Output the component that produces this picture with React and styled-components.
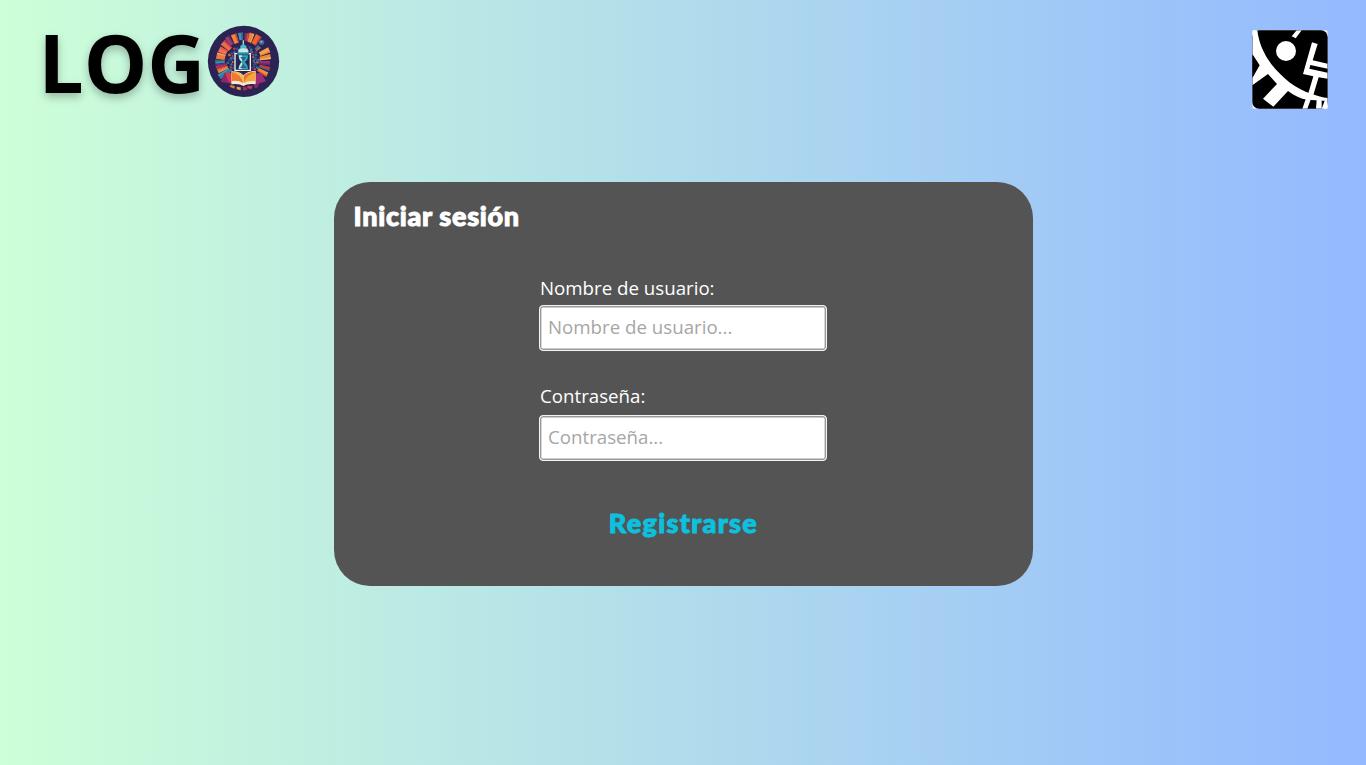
import React from "react";
import styled, { createGlobalStyle } from "styled-components";

const GlobalStyle = createGlobalStyle`
  * { box-sizing: border-box; }
  body { margin: 0; font-family: "Open Sans", "Noto Sans", sans-serif; }
`;

const Page = styled.div`
  height: 765px;
  overflow: hidden;
  background: linear-gradient(90deg, #cdffd8, #94b9ff);
`;

const Header = styled.header`
  height: 182px;
  padding: 25px 38px 0 38.5px;
  display: flex;
  justify-content: space-between;
  align-items: flex-start;
`;

const Brand = styled.div`
  display: flex;
  align-items: flex-start;
`;

const Wordmark = styled.span`
  width: 168.5px;
  margin-top: -3px;
  font-size: 80px;
  line-height: 80px;
  font-weight: 700;
  color: #000;
  text-shadow: 0 4px 9px rgba(0, 0, 0, 0.27);
`;

const EmblemSvg = styled.svg`
  display: block;
  width: 73px;
  height: 73px;
`;

const BadgeSvg = styled.svg`
  display: block;
  width: 76px;
  height: 79px;
  margin-top: 5px;
`;

const Card = styled.main`
  width: 699px;
  height: 403.5px;
  margin: 0 auto;
  padding: 17px 20px;
  border-radius: 36px;
  background: #545454;
  display: flex;
  flex-direction: column;
  align-items: center;
`;

const roundedFace = `
  margin: 0;
  font-family: "Lato", sans-serif;
  font-weight: 900;
  white-space: nowrap;
  -webkit-text-stroke: 1px currentColor;
  stroke-linejoin: round;
`;

const Title = styled.h1`
  ${roundedFace}
  align-self: flex-start;
  font-size: 27px;
  line-height: 34px;
  letter-spacing: 0.7px;
  color: #fff;
`;

const Form = styled.form`
  width: 288px;
  margin-top: 41px;
  display: flex;
  flex-direction: column;
`;

const Field = styled.div`
  height: ${(p) => p.$height}px;
`;

const Label = styled.label`
  display: block;
  height: ${(p) => p.$height}px;
  padding-left: 1px;
  font-size: 18.7px;
  font-weight: 400;
  line-height: 28px;
  color: #fff;
`;

const Input = styled.input`
  display: block;
  width: 288px;
  height: 46px;
  padding: 0 8px 3px;
  border: 1px solid #f4f4f4;
  border-radius: 4px;
  outline: none;
  box-shadow: inset 0 0 0 1.4px #999;
  background: #fff;
  font: 400 18.7px "Open Sans", sans-serif;
  &::placeholder { color: #a6a6a6; opacity: 1; }
`;

const Register = styled.a`
  ${roundedFace}
  margin-top: -1px;
  padding-left: 1px;
  font-size: 27px;
  line-height: 34px;
  letter-spacing: 1.3px;
  color: #0cc0df;
`;

// Books around the ring: angle, inner radius, outer radius, width, colour, spine colour
const BOOKS = [
  [-78, 56, 82, 19, "#ef7a3c", "#f6a04b"],
  [-63, 56, 81, 18, "#ec6f62", "#e8503c"],
  [-47, 53, 84, 19, "#ee6b3f", "#a83a70"],
  [-34, 60, 88, 15, "#a9386f", "#6c2d6b"],
  [-20, 58, 86, 17, "#f0853c", "#d9443c"],
  [-6, 64, 86, 14, "#3f95ae", "#2a6389"],
  [7, 62, 85, 13, "#8c2e68", "#d84a3c"],
  [17, 60, 88, 15, "#f2823a", "#f4a046"],
  [31, 60, 90, 19, "#f0652e", "#c83a3a"],
  [47, 50, 66, 13, "#2f7396", "#e45738"],
  [66, 54, 85, 16, "#f4a14a", "#ef7c35"],
  [80, 50, 83, 15, "#f08a38", "#f6b060"],
  [94, 48, 80, 13, "#9c2f74", "#5f2a68"],
  [106, 50, 82, 12, "#d13c38", "#2d6d96"],
  [119, 50, 82, 14, "#f28d3a", "#e5502f"],
  [-91, 56, 84, 12, "#3b8fae", "#276a92"],
  [-101, 50, 84, 12, "#b13366", "#7c2a64"],
  [-111, 50, 82, 13, "#f0873a", "#e4553a"],
  [-123, 48, 86, 16, "#2f7fa4", "#3a9cb5"],
].map(([angle, from, to, width, fill, spine]) => ({ angle, from, to, width, fill, spine }));

const SPECKS = ["#2f7fa4", "#c83a4c", "#3f4a86", "#2a6d96", "#51407c", "#2f7fa4", "#e4663a", "#384a82"];

function Emblem() {
  return (
    <EmblemSvg viewBox="23 21 219 219" aria-hidden="true">
      <circle cx="132.5" cy="130" r="107" fill="#2b2353" />
      {BOOKS.map(({ angle, from, to, width, fill, spine }) => (
        <g key={angle} transform={`rotate(${angle} 132 130)`}>
          <path
            d={`M${132 - width / 2} ${130 - to}h${width}l-2 ${to - from}h${4 - width}z`}
            fill={fill}
          />
          <path
            d={`M${132 + width / 2 - 5} ${130 - to}h5l-2 ${to - from}h-3z`}
            fill={spine}
          />
        </g>
      ))}
      {Array.from({ length: 26 }, (_, i) => (
        <g key={i} transform={`rotate(${-125 + i * 10} 132 130)`}>
          <rect x="128" y={80 + (i % 3) * 4} width="7" height="8" rx="3" fill={SPECKS[i % 8]} />
          <circle cx="133" cy={94 + (i % 2) * 4} r="3" fill={SPECKS[(i + 3) % 8]} />
        </g>
      ))}
      <circle cx="187" cy="73" r="8" fill="#41669a" />
      <circle cx="186" cy="71" r="3" fill="#9bb9d2" />
      <circle cx="167" cy="129" r="6" fill="none" stroke="#456a99" strokeWidth="3" />
      <path d="M104 106h50v56h-50z" fill="#272653" />
      <path d="M114 107h-7v50h46v-50h-7" fill="none" stroke="#eef4f4" strokeWidth="4" />
      <path d="M132 67v13" stroke="#a9dce2" strokeWidth="4" />
      <path d="M123 85q9-12 18 0v8h-18z" fill="#53bac9" />
      <path d="M117 96q4-5 15-5t15 5v9h-30z" fill="#c5e9e9" />
      <path d="M115 103h34v7h-34z" fill="#268dac" />
      <path d="M118 112h28q0 15-10 20 9 6 10 21h-28q1-14 10-21-10-6-10-20z" fill="#38a3b2" />
      <path d="M118 112h10v41h-10q1-14 10-21-10-6-10-20z" fill="#b5e5e4" />
      <path d="M123 117h18l-9 12z" fill="#20678c" />
      <path d="M122 150l10-12 10 12z" fill="#20678c" />
      <path d="M64 191l12-26 23 1v32z" fill="#8d276b" />
      <path d="M167 166l19 0 14 24-33 10z" fill="#9e2b75" />
      <path d="M77 163l19 3v29l-10-7z" fill="#d73847" />
      <path d="M96 160q25-1 36 12 12-13 37-13v40q-26-3-37 5-12-8-36-5z" fill="#f8e8cf" />
      <path d="M97 161q24 0 34 13v21q-12-9-34-6z" fill="#ee7934" />
      <path d="M133 174q12-14 35-13v28q-23-2-35 7z" fill="#f6a53e" />
      <path d="M98 162q25 7 33 29v-17q-10-12-33-12z" fill="#f6bd4a" />
      <path d="M168 163q-20 5-35 29v-18q10-12 35-11z" fill="#e7742e" />
      <path d="M94 201l13 3-2 8-14-6z" fill="#e57a3d" />
      <path d="M112 206l12 2v9l-12-3z" fill="#f0a14b" />
      <path d="M130 208l10-2 4 9-12 3z" fill="#a32c5d" />
      <path d="M145 203l15 2-4 9-13-4z" fill="#cf3948" />
      <path d="M164 202l16-5-5 11-9 3z" fill="#8d276b" />
    </EmblemSvg>
  );
}

function Badge() {
  return (
    <BadgeSvg viewBox="37 31 228 237" aria-hidden="true">
      <defs>
        <clipPath id="badge-area"><rect x="38" y="32" width="226" height="235" /></clipPath>
      </defs>
      <rect x="38" y="32" width="226" height="235" rx="5" fill="#e9efff" />
      <rect x="38" y="32" width="226" height="235" rx="20" fill="#000" />
      <g clipPath="url(#badge-area)">
        <path d="M38 32H53C57 67 72 103 94 132C128 175 169 208 215 222C233 228 249 233 264 235V244L203 240C183 238 164 228 145 214L101 261L70 237L112 193L85 163L38 197V175L60 137L38 103Z" fill="#fff" />
        <path d="M38 106L58 137L38 174Z" fill="#000" />
        <circle cx="139" cy="94" r="30" fill="#fff" />
        <path d="M171 32H186L168 56L156 50Z" fill="#fff" />
        <path d="M217 68L234 73L219 122L264 132V147L212 136L209 147L264 159V177L237 173L221 226L206 221L221 170L190 163Z" fill="#fff" />
        <path d="M199 236L213 240L203 267H188Z" fill="#fff" />
        <path d="M231 240H246V267H229Z" fill="#fff" />
        <path d="M255 243H264V267H246Z" fill="#fff" />
      </g>
    </BadgeSvg>
  );
}

export default function App() {
  return (
    <Page>
      <GlobalStyle />
      <Header>
        <Brand>
          <Wordmark>LOG</Wordmark>
          <Emblem />
        </Brand>
        <Badge />
      </Header>
      <Card>
        <Title>Iniciar sesión</Title>
        <Form>
          <Field $height={108}>
            <Label htmlFor="user" $height={31}>Nombre de usuario:</Label>
            <Input id="user" placeholder="Nombre de usuario..." />
          </Field>
          <Field $height={125}>
            <Label htmlFor="password" $height={33}>Contraseña:</Label>
            <Input id="password" type="password" placeholder="Contraseña..." />
          </Field>
        </Form>
        <Register>Registrarse</Register>
      </Card>
    </Page>
  );
}
